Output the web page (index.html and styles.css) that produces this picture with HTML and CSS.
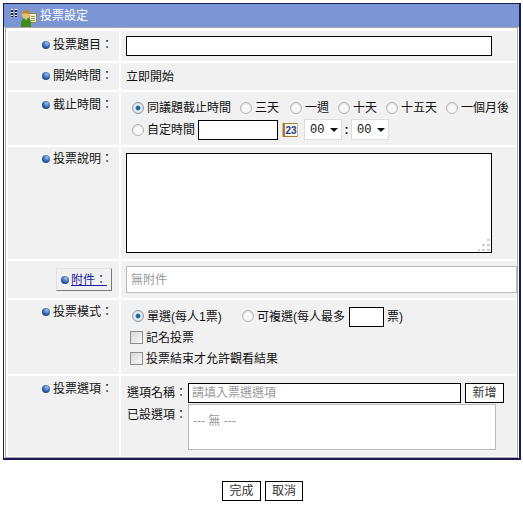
FILE: index.html
```html
<!doctype html>
<html>
<head>
<meta charset="utf-8">
<title>投票設定</title>
<link rel="stylesheet" href="styles.css">
</head>
<body>
<div class="frame">
	<div class="head">
		<span class="grip"></span>
		<svg class="head-icon" width="16" height="17" viewBox="0 0 16 17">
			<rect x="8.500" y="3.500" width="7" height="9" fill="#f4efc4" stroke="#8a8a5a"/>
			<path d="M10 6.500h4M10 8.500h4M10 10.500h4" stroke="#9a9a70"/>
			<path d="M0 17v-4c0-3 2-4 4-5h3c2 1 3 2 3 5v4z" fill="#3f8a1a"/>
			<path d="M4 8l1 3 1-3z" fill="#e8e8c0"/>
			<circle cx="5" cy="4.500" r="4" fill="#e8c070"/>
			<path d="M1 4c0-3 2-4 4-4s4 1 4 4c-2 0-5-1-8 0z" fill="#b08a30"/>
		</svg>
		<span class="head-title">投票設定</span>
	</div>
	<div class="inner">
		<div class="grid">
			<div class="lbl r1"><i class="dot"></i>投票題目：</div>
			<div class="val r1v"><input class="txt w-title" type="text"></div>

			<div class="lbl r2"><i class="dot"></i>開始時間：</div>
			<div class="val r2v">立即開始</div>

			<div class="lbl r3"><i class="dot"></i>截止時間：</div>
			<div class="val r3v">
				<div class="line l-top">
					<label class="opt"><input class="radio" type="radio" name="end" checked>同議題截止時間</label>
					<label class="opt"><input class="radio" type="radio" name="end">三天</label>
					<label class="opt opt-week"><input class="radio" type="radio" name="end">一週</label>
					<label class="opt"><input class="radio" type="radio" name="end">十天</label>
					<label class="opt"><input class="radio" type="radio" name="end">十五天</label>
					<label class="opt"><input class="radio" type="radio" name="end">一個月後</label>
				</div>
				<div class="line l-date">
					<label class="opt"><input class="radio" type="radio" name="end">自定時間</label>
					<input class="txt w-date" type="text">
					<svg class="cal" width="16" height="16" viewBox="0 0 16 16">
						<rect x="0.500" y="1" width="15" height="14" fill="#a87a30"/>
						<rect x="3" y="2" width="12" height="12" fill="#fdf8e4"/>
						<text x="9" y="12" text-anchor="middle" class="cal-num">23</text>
					</svg>
					<span class="sel">00</span>
					<span class="colon">:</span>
					<span class="sel">00</span>
				</div>
			</div>

			<div class="lbl r4"><i class="dot"></i>投票說明：</div>
			<div class="val r4v">
				<div class="area-wrap">
					<textarea class="area"></textarea>
					<svg class="grab" width="12" height="12" viewBox="0 0 12 12">
						<path d="M9 0h3v2h-3zM4 5h3v2h-3zM9 5h3v2h-3zM0 10h2v2h-2zM4 10h3v2h-3zM9 10h3v2h-3z" fill="#ccc"/>
					</svg>
				</div>
			</div>

			<div class="lbl r5"><a class="attach" href="#"><i class="dot"></i><span>附件：</span></a></div>
			<div class="val r5v"><div class="none-box">無附件</div></div>

			<div class="lbl r6"><i class="dot"></i>投票模式：</div>
			<div class="val r6v">
				<div class="line l-mode">
					<label class="opt opt-single"><input class="radio" type="radio" name="mode" checked>單選(每人1票)</label>
					<label class="opt"><input class="radio" type="radio" name="mode">可複選(每人最多</label>
					<input class="txt w-num" type="text">
					<span>票)</span>
				</div>
				<label class="line l-check"><input class="check" type="checkbox">記名投票</label>
				<label class="line l-check"><input class="check" type="checkbox">投票結束才允許觀看結果</label>
			</div>

			<div class="lbl r7"><i class="dot"></i>投票選項：</div>
			<div class="val r7v">
				<div class="line l-item">
					<span class="item-name">選項名稱：</span>
					<input class="txt w-item" type="text" placeholder="請填入票選選項">
					<button class="btn btn-add" type="button">新增</button>
				</div>
				<div class="line l-list">
					<span class="item-name">已設選項：</span>
					<div class="list-box">--- 無 ---</div>
				</div>
			</div>
		</div>
	</div>
</div>
<div class="actions">
	<button class="btn btn-main" type="button">完成</button>
	<button class="btn btn-cancel" type="button">取消</button>
</div>
</body>
</html>
```

FILE: styles.css
```css
* {
	box-sizing: border-box;
}
body {
	margin: 0;
	padding: 3px 0 0 3px;
	background: #fff;
	color: #111;
	font: 12px/14px "Liberation Sans", "Noto Sans CJK TC", sans-serif;
}
input, button, textarea {
	font: inherit;
	margin: 0;
}
.frame {
	width: 518px;
	border: solid #1b1b55;
	border-width: 1px 2px 2px 1px;
	background: #fff;
}
.head {
	height: 23px;
	background: #7b95d5;
	display: flex;
	align-items: center;
	color: #fff;
}
.grip {
	width: 6px;
	height: 8px;
	margin: -5px 0 0 7px;
	background:
		linear-gradient(#fff 50%, #223 50%) 0 0 / 2px 3px,
		linear-gradient(#fff 50%, #223 50%) 4px 0 / 2px 3px;
	background-repeat: repeat-y;
}
.head-icon {
	margin: 5px 0 0 4px;
}
.head-title {
	margin-left: 3px;
}
.inner {
	margin: 0 1px;
	border: 1px solid #a8a8a8;
	padding: 3px 1px 1px 2px;
}
.grid {
	display: grid;
	grid-template-columns: 111px 395px;
	grid-template-rows: 30px 27px 53px 112px 37px 74px 80px;
	gap: 2px;
}
.lbl, .val {
	background: #f1f1f1;
}
.lbl {
	display: flex;
	justify-content: flex-end;
	align-items: flex-start;
	padding: 6px 6px 0 0;
	height: 100%;
}
.val {
	padding-left: 5px;
}
.dot {
	width: 8px;
	height: 8px;
	margin: 3px 3px 0 0;
	border-radius: 50%;
	background: radial-gradient(circle at 60% 30%, #9dc0ea, #2a5ea8 55%, #12305f);
}
.r1 { padding-top: 7px; }
.r4 { padding-top: 5px; }
.r5 { padding: 7px 7px 0 0; }
.r6 { padding-top: 5px; }

.r1v { padding-top: 5px; }
.r2v { padding-top: 7px; }
.r3v { padding: 5px 0 0 11px; }
.r4v { padding-top: 6px; }
.r5v { padding-top: 5px; }
.r6v { padding: 7px 0 0 11px; }
.r7v { padding-top: 7px; }

.txt {
	height: 20px;
	padding: 0 3px;
	border: 1px solid #000;
	background: #fff;
	outline: none;
}
.txt::placeholder {
	color: #999;
}
.w-title { width: 366px; }
.w-date { width: 80px; margin-left: 3px; }
.w-num { width: 35px; margin-left: 4px; }
.w-item { width: 273px; }

.line {
	display: flex;
	align-items: center;
}
.opt {
	display: flex;
	align-items: center;
}
.opt-week {
	margin-left: 2px;
}
.radio {
	appearance: none;
	width: 12px;
	height: 12px;
	margin: 0 3px 0 0;
	border: 1px solid #b4b4b4;
	border-radius: 50%;
	background: radial-gradient(circle at 50% 60%, #f8f8f8 45%, #d4d4d4);
}
.radio:checked {
	border-color: #8a9aa8;
	background: radial-gradient(circle, #1c6ea8 28%, #e8eef2 40%, #d0d6da);
}
.check {
	appearance: none;
	flex: none;
	width: 13px;
	height: 13px;
	margin: 0 3px 0 0;
	border: 1px solid #8e8e8e;
	background: linear-gradient(135deg, #d8d8d8, #f8f8f8);
}
.l-top {
	height: 22px;
	gap: 9px;
}
.l-date {
	height: 21px;
}
.cal {
	margin: 1px 6px 0 4px;
}
.cal-num {
	font: bold 10px "Liberation Sans", sans-serif;
	fill: #1c3c9c;
}
.sel {
	width: 38px;
	height: 21px;
	padding-left: 5px;
	line-height: 20px;
	background: #fff;
	border: 1px solid #ddd;
	position: relative;
	font-family: "Liberation Mono", monospace;
}
.sel::after {
	content: "";
	position: absolute;
	right: 3px;
	top: 8px;
	border: 4px solid transparent;
	border-top: 4px solid #111;
	border-bottom: 0;
}
.colon {
	width: 9px;
	text-align: center;
	font-weight: bold;
}
.area-wrap {
	position: relative;
	width: 366px;
	height: 100px;
}
.area {
	display: block;
	width: 100%;
	height: 100%;
	border: 1px solid #000;
	outline: none;
	resize: none;
}
.grab {
	position: absolute;
	right: 2px;
	bottom: 2px;
}
.attach {
	display: flex;
	align-items: center;
	height: 23px;
	padding: 0 4px 0 4px;
	border: 1px solid;
	border-color: #e4e4e4 #7a7a7a #7a7a7a #e4e4e4;
	color: #1a1aa0;
}
.attach .dot {
	margin: 0 2px 0 0;
}
.none-box {
	width: 391px;
	height: 27px;
	padding: 6px 0 0 4px;
	background: #fff;
	border: 1px solid #bbb;
	color: #999;
}
.l-mode {
	height: 20px;
}
.opt-single {
	width: 110px;
}
.l-mode .radio {
	margin-top: -3px;
}
.l-mode span {
	margin-left: 3px;
}
.l-check {
	height: 21px;
}
.l-check .check {
	margin-left: -2px;
}
.item-name {
	margin-left: 1px;
	width: 61px;
	flex: none;
}
.l-list {
	align-items: flex-start;
	margin-top: 1px;
}
.l-list .item-name {
	margin-top: 4px;
}
.list-box {
	width: 308px;
	height: 46px;
	padding: 9px 0 0 4px;
	background: #fff;
	border: 1px solid #bbb;
	color: #999;
}
.btn {
	height: 20px;
	padding: 0;
	border: 1px solid #000;
	background: #fff;
	color: #333;
}
.btn-add {
	width: 39px;
	margin-left: 4px;
}
.actions {
	display: flex;
	justify-content: center;
	gap: 4px;
	margin: 21px 0 0 -1px;
}
.btn-main {
	width: 39px;
}
.btn-cancel {
	width: 38px;
}
```
